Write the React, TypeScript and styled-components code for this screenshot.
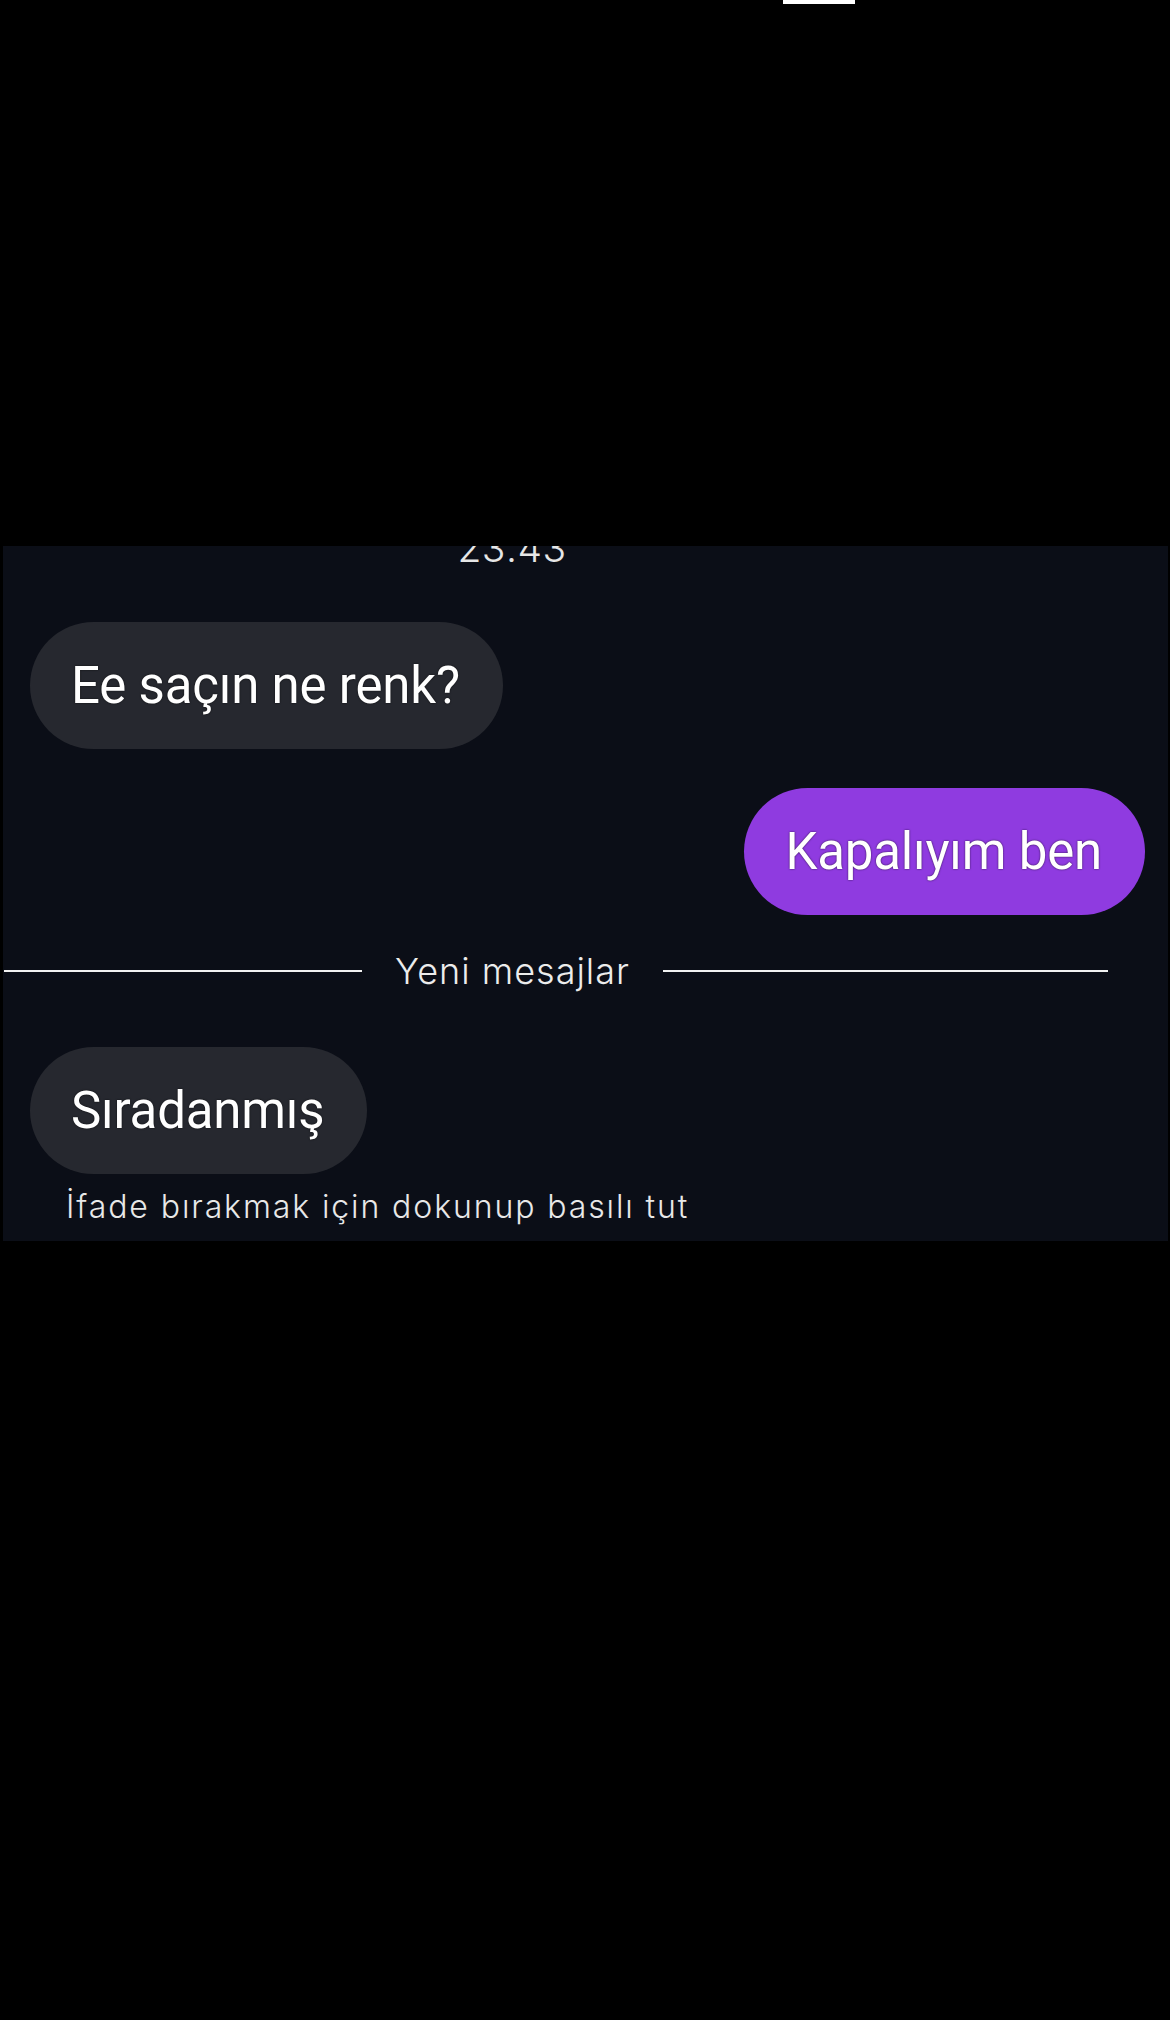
import React from "react";
import styled, { createGlobalStyle } from "styled-components";

const GlobalStyle = createGlobalStyle`
  html, body {
    margin: 0;
    padding: 0;
    background: #000;
  }
  body {
    font-family: Roboto, "Noto Sans", "Liberation Sans", sans-serif;
    -webkit-font-smoothing: antialiased;
  }
`;

const Page = styled.div`
  width: 1170px;
  height: 2020px;
  background: #000;
  display: flex;
  flex-direction: column;
  overflow: hidden;
`;

const TopArea = styled.div`
  height: 546px;
  display: flex;
  flex-direction: row;
  padding-left: 783px;
  box-sizing: border-box;
`;

const Notch = styled.div`
  width: 72px;
  height: 4px;
  background: #fff;
`;

const Panel = styled.div`
  margin-left: 3px;
  width: 1165px;
  height: 695px;
  background: #0b0e17;
  display: flex;
  flex-direction: column;
  overflow: hidden;
`;

const Time = styled.div`
  width: 1018px;
  height: 39px;
  margin-top: -18px;
  text-align: center;
  font-family: Inter, Roboto, sans-serif;
  font-size: 39px;
  line-height: 39px;
  font-weight: 300;
  letter-spacing: 0.5px;
  color: #e6e6e6;
`;

const Row = styled.div<{ $side: "left" | "right"; $top: number }>`
  display: flex;
  justify-content: ${(p) => (p.$side === "left" ? "flex-start" : "flex-end")};
  padding-left: ${(p) => (p.$side === "left" ? "27px" : "0")};
  padding-right: ${(p) => (p.$side === "right" ? "23px" : "0")};
  margin-top: ${(p) => p.$top}px;
`;

const Bubble = styled.div<{ $sent?: boolean }>`
  height: 127px;
  box-sizing: border-box;
  display: flex;
  align-items: center;
  padding: 0 43px 0 41px;
  border-radius: 64px;
  background: ${(p) => (p.$sent ? "#8f3be0" : "#26282f")};
  color: #fff;
  font-size: 51px;
  font-weight: 400;
  letter-spacing: -0.2px;
  white-space: nowrap;
  text-shadow: 0 0 2px rgba(0, 0, 0, 0.75);
`;

const Divider = styled.div`
  margin-top: 34px;
  height: 44px;
  display: flex;
  align-items: center;
  gap: 33px;
  padding-left: 1px;
  padding-right: 60px;
`;

const Line = styled.div<{ $grow?: boolean }>`
  height: 2px;
  background: #f2f2f2;
  flex: ${(p) => (p.$grow ? "1 1 auto" : "0 0 358px")};
`;

const DividerLabel = styled.span`
  font-family: Inter, Roboto, sans-serif;
  font-size: 36px;
  line-height: 44px;
  font-weight: 300;
  letter-spacing: 1px;
  color: #ececec;
  white-space: nowrap;
`;

const Hint = styled.div`
  margin-top: 15px;
  padding-left: 63px;
  font-family: Inter, Roboto, sans-serif;
  font-size: 32px;
  line-height: 36px;
  font-weight: 300;
  letter-spacing: 1.9px;
  color: #e8e8e8;
  white-space: nowrap;
`;

export default function App() {
  return (
    <>
      <GlobalStyle />
      <Page>
        <TopArea>
          <Notch />
        </TopArea>
        <Panel>
          <Time>23:43</Time>
          <Row $side="left" $top={55}>
            <Bubble>Ee saçın ne renk?</Bubble>
          </Row>
          <Row $side="right" $top={39}>
            <Bubble $sent>Kapalıyım ben</Bubble>
          </Row>
          <Divider>
            <Line />
            <DividerLabel>Yeni mesajlar</DividerLabel>
            <Line $grow />
          </Divider>
          <Row $side="left" $top={54}>
            <Bubble>Sıradanmış</Bubble>
          </Row>
          <Hint>İfade bırakmak için dokunup basılı tut</Hint>
        </Panel>
      </Page>
    </>
  );
}
